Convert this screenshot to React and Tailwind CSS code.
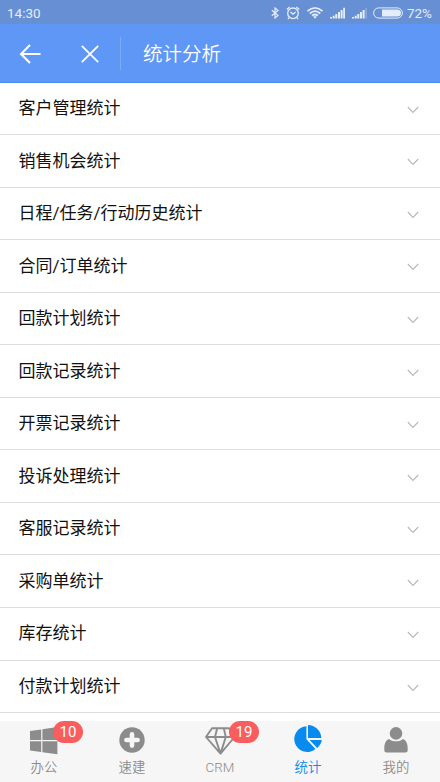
import React, { useState } from "react";

const reports = [
  "客户管理统计",
  "销售机会统计",
  "日程/任务/行动历史统计",
  "合同/订单统计",
  "回款计划统计",
  "回款记录统计",
  "开票记录统计",
  "投诉处理统计",
  "客服记录统计",
  "采购单统计",
  "库存统计",
  "付款计划统计",
];

const WindowsIcon = () => (
  <svg width="30" height="28" viewBox="0 0 30 28" fill="currentColor">
    <path d="M1 4.1 12.2 2.4V13H1zM13.4 2.2 28.4 0V13H13.4zM1 14.3H12.2V25L1 23.6zM13.4 14.3H28.4V27.2L13.4 25.2z" />
  </svg>
);

const PlusIcon = () => (
  <svg className="-mt-[2px]" width="26" height="26" viewBox="0 0 26 26">
    <circle cx="13" cy="13" r="12.7" fill="currentColor" />
    <path d="M13 7.4v11.2M7.4 13h11.2" stroke="#f6f6f6" strokeWidth="4.6" strokeLinecap="round" />
  </svg>
);

const DiamondIcon = () => (
  <svg
    width="32"
    height="28"
    viewBox="0 0 32 28"
    fill="none"
    stroke="currentColor"
    strokeWidth="1.9"
    strokeLinejoin="round"
  >
    <path d="M8 1.2H25L30.6 10 16.5 26.6 2 10zM2 10H30.6M13.2 1.2 11 10 16.5 26.6 21.8 10 19.8 1.2" />
  </svg>
);

const PieIcon = () => (
  <svg className="-mt-[3px] -ml-px" width="30" height="28" viewBox="0 0 30 28" fill="currentColor">
    <path d="M13.4 1.2V14.3L22.4 24A12.9 12.9 0 1 1 13.4 1.2z" />
    <path d="M15 0A13.6 13.6 0 0 1 28.3 12.9H15z" />
    <path d="M16.6 14.9H28.8A13 13 0 0 1 24.2 22.9z" />
  </svg>
);

const UserIcon = () => (
  <svg className="-mt-px" width="24" height="26" viewBox="0 0 24 26" fill="currentColor">
    <circle cx="12" cy="6.4" r="6.3" />
    <path d="M5.3 12C7.4 15.1 16.6 15.1 18.7 12 22 12.8 23.7 16.5 23.7 21.4V23Q23.7 25.5 21.2 25.5H2.8Q.3 25.5 .3 23V21.4C.3 16.5 2 12.8 5.3 12z" />
  </svg>
);

const tabs = [
  { name: "办公", Icon: WindowsIcon, badge: 10 },
  { name: "速建", Icon: PlusIcon },
  { name: "CRM", Icon: DiamondIcon, badge: 19 },
  { name: "统计", Icon: PieIcon },
  { name: "我的", Icon: UserIcon },
];

const StatusBar = () => (
  <div className="h-6 shrink-0 flex items-center justify-between pl-[7px] pr-[7px] pt-px bg-[#678fd3] text-[#e4edfb] text-[13.5px] leading-5">
    <span>14:30</span>
    <div className="flex items-center">
      {/* bluetooth */}
      <svg width="8" height="12" viewBox="0 0 8 12" fill="none" stroke="currentColor" strokeWidth="1.2">
        <path d="M.8 3.3 7 8.5 4 11V1L7 3.5.8 8.7" />
      </svg>
      {/* alarm */}
      <svg className="ml-[7px]" width="14" height="14" viewBox="0 0 14 14" fill="none" stroke="currentColor" strokeWidth="1.3">
        <path d="M4.5 6 7 8.2 9.6 6M.8 3.4 3.6 1M13.2 3.4 10.4 1M3.1 11.6 2 13M10.9 11.6 12 13" />
        <circle cx="7" cy="7.3" r="5.3" />
      </svg>
      {/* wifi */}
      <svg className="ml-[6px]" width="18" height="13" viewBox="0 0 18 13" fill="none" stroke="currentColor" strokeWidth="1.7">
        <path d="M1.4 5.2Q9-1.6 16.6 5.2M3.8 7.5Q9 2.9 14.2 7.5M6.1 9.7Q9 7.3 11.9 9.7" />
        <path d="M7.2 10.8Q9 9.4 10.8 10.8L9 12.8z" fill="currentColor" stroke="none" />
      </svg>
      {/* signal */}
      <svg className="ml-[6px]" width="15" height="12" viewBox="0 0 15 12" fill="currentColor">
        <path d="M0 10h2v1.5H0zM2.7 8.7h2v2.8h-2zM5.3 7h2v4.5h-2zM8 5h2v6.5H8zM10.6 3h2v8.5h-2zM13.2.8h1.8v10.7h-1.8z" />
      </svg>
      <svg className="ml-[7px]" width="15" height="12" viewBox="0 0 15 12" fill="currentColor">
        <path d="M0 10h2v1.5H0zM2.7 8.7h2v2.8h-2zM5.3 7h2v4.5h-2zM8 5h2v6.5H8zM10.6 3h2v8.5h-2z" />
        <path d="M13.2.8h1.8v10.7h-1.8z" opacity=".25" />
      </svg>
      {/* battery */}
      <svg className="ml-[6px]" width="30" height="12" viewBox="0 0 30 12">
        <rect x=".6" y=".9" width="28.8" height="10.2" rx="5.1" fill="none" stroke="currentColor" />
        <path d="M9 2.4H24.4A3.6 3.6 0 0 1 24.4 9.6H9z" fill="currentColor" />
      </svg>
      <span className="ml-[4px] w-[26px] tracking-[-0.1px]">72%</span>
    </div>
  </div>
);

const Header = () => (
  <div className="h-[58.5px] shrink-0 flex items-center bg-[#5e97f6] border-b border-[#4c8bf1] text-white">
    <svg className="ml-[19px] mt-[2px]" width="22" height="20" viewBox="0 0 22 20" fill="none" stroke="currentColor" strokeWidth="2.1">
      <path d="M21.5 10H2M11 1 2 10 11 19" />
    </svg>
    <svg className="ml-[39.5px] mt-[2px]" width="18" height="18" viewBox="0 0 18 18" fill="none" stroke="currentColor" strokeWidth="1.8">
      <path d="M.8.8 17.2 17.2M17.2.8.8 17.2" />
    </svg>
    <div className="ml-[21.5px] mt-[2px] h-[33px] w-px bg-[#7eacf8]" />
    <h1 className="ml-[22px] mt-[5px] text-[19.5px] leading-7 font-[350]">统计分析</h1>
  </div>
);

const ReportRow = ({ title }) => (
  <div className="h-[52.55px] shrink-0 flex items-center justify-between border-b border-[#dcdcdc] pl-[18.5px] pr-[21px]">
    <span className="-mt-[0.5px] text-[17px] leading-6 text-[#111]">{title}</span>
    <svg className="mt-[3px]" width="12" height="8" viewBox="0 0 12 8" fill="none" stroke="#b8b8b8" strokeWidth="1.1">
      <path d="M.8 1 6 6.5 11.2 1" />
    </svg>
  </div>
);

const App = () => {
  const [active, setActive] = useState("统计");

  return (
    <div className="w-[440px] h-[782px] flex flex-col overflow-hidden bg-white font-[Roboto,'Noto_Sans_CJK_SC',sans-serif]">
      <StatusBar />
      <Header />
      <div className="flex-1 min-h-0 flex flex-col overflow-hidden">
        {reports.map((title) => (
          <ReportRow key={title} title={title} />
        ))}
      </div>
      <div className="h-[61px] shrink-0 grid grid-cols-5 bg-[#f6f6f6]">
        {tabs.map(({ name, Icon, badge }) => (
          <button
            key={name}
            type="button"
            onClick={() => setActive(name)}
            className={`relative flex flex-col items-center ${
              active === name ? "text-[#078bef]" : "text-[#8c8c8c]"
            }`}
          >
            <span className="h-[37px] pt-[2px] flex items-center justify-center">
              <Icon />
            </span>
            <span className="text-[13.4px] leading-5 font-[350]">{name}</span>
            {badge && (
              <span className="absolute top-0 left-[53px] w-[30px] h-[22px] rounded-full bg-[#f95d5d] text-white text-[15px] leading-[22px] text-center">
                {badge}
              </span>
            )}
          </button>
        ))}
      </div>
    </div>
  );
};

export default App;
